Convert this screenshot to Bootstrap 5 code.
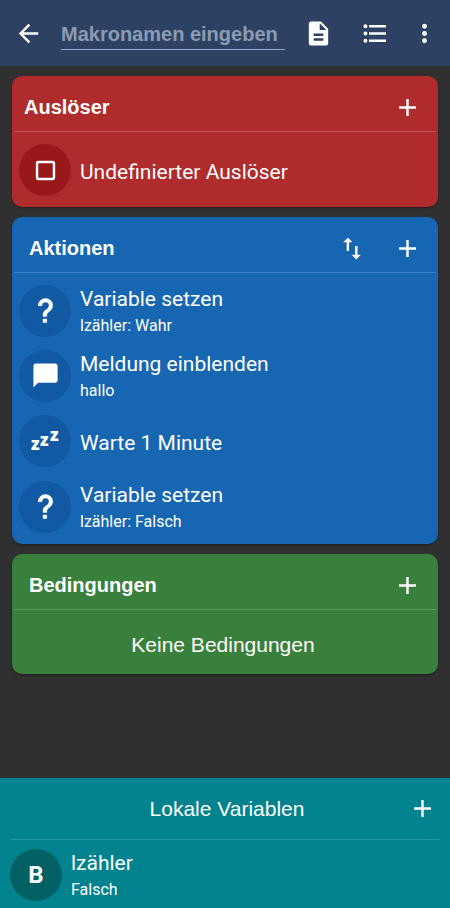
<!DOCTYPE html>
<html lang="de">
<head>
<meta charset="utf-8">
<meta name="viewport" content="width=device-width, initial-scale=1">
<title>Makro bearbeiten</title>
<link href="https://cdn.jsdelivr.net/npm/bootstrap@5.3.0/dist/css/bootstrap.min.css" rel="stylesheet">
<style>
  body { background: #303030; color: #fff; font-family: Roboto, sans-serif; }
  .topbar { background: #2d4263; height: 66px; padding: 0 4px 0 14px; }
  .macro-name {
    min-width: 0; height: 31px; margin: 2px 5px 0 18px; padding: 2px 0 0;
    background: transparent; color: #fff; border: 0; border-bottom: 1px solid #93a4e0;
    border-radius: 0; outline: 0;
    font: bold 20px/28px "Liberation Sans", sans-serif;
  }
  .macro-name::placeholder { color: #8c9bb1; opacity: 1; }
  .icon-btn { width: 56px; height: 44px; padding: 0; border: 0; color: #fff; background: transparent; flex: none; display: flex; align-items: center; justify-content: center; }
  .icon-btn.narrow { width: 44px; }
  .icon-btn.back { width: 29px; }
  .glyph { width: 29px; height: 29px; fill: currentColor; display: block; }
  .glyph-sleep { width: 48px; height: 48px; }
  main { padding: 10px 12px; gap: 10px; }
  .panel { border-radius: 10px; padding: 0 2px; box-shadow: 0 1px 2px rgba(0,0,0,.4); }
  .panel-red { background: #b02b2b; --disc: #991819; }
  .panel-blue { background: #1766b1; --disc: #1159a3; }
  .panel-green { background: #39803d; }
  .panel-teal { background: #00838f; --disc: #006064; }
  .panel-head { height: 56px; padding: 0 1px 0 15px; border-bottom: 1px solid rgba(255,255,255,.18); }
  .panel-red .panel-head { padding-left: 10px; }
  .panel-head h2 { font: bold 20px/28px "Liberation Sans", sans-serif; padding-top: 6px; }
  .rows { padding: 5px 5px 4px; }
  .panel-blue .rows { padding-bottom: 5px; }
  .entry { min-height: 66px; gap: 9px; }
  .disc { width: 52px; height: 52px; background: var(--disc); flex: none; }
  .entry-title { font-size: 21px; line-height: 30px; }
  .entry-sub { font-size: 16px; line-height: 24px; }
  .entry.two-line { min-height: 65px; }
  .plain-note { font: 21px/28px "Liberation Sans", sans-serif; }
  .empty { padding: 21px 4px 15px 0; }
  .vars { padding: 0 10px 6px; }
  .vars-head { height: 62px; border-bottom: 1px solid rgba(255,255,255,.15); display: grid; grid-template-columns: 44px 1fr 40px; align-items: center; }
  .vars .entry { padding-top: 8px; min-height: 62px; }
  .letter { font-size: 24px; line-height: 28px; font-weight: 700; }
</style>
</head>
<body>
<svg class="d-none" aria-hidden="true">
  <symbol id="plus" viewBox="0 0 24 24"><path d="M19 13h-6v6h-2v-6H5v-2h6V5h2v6h6z"/></symbol>
  <symbol id="question" viewBox="0 0 24 24"><path stroke="currentColor" stroke-width=".4" d="M10,19H13V22H10V19M12,2C17.35,2.22 19.68,7.62 16.5,11.67C15.67,12.67 14.33,13.33 13.67,14.17C13,15 13,16 13,17H10C10,15.33 10,13.92 10.67,12.92C11.33,11.92 12.67,11.33 13.5,10.67C15.92,8.43 15.32,5.26 12,5A3,3 0 0,0 9,8H6A6,6 0 0,1 12,2Z"/></symbol>
</svg>
<div class="d-flex flex-column min-vh-100">
  <header class="topbar d-flex align-items-center">
    <button type="button" class="icon-btn back" aria-label="Zurück"><svg class="glyph" viewBox="0 0 24 24"><path d="M20 11H7.830l5.590-5.590L12 4l-8 8 8 8 1.410-1.410L7.830 13H20z"/></svg></button>
    <input type="text" class="macro-name flex-grow-1" placeholder="Makronamen eingeben" aria-label="Makroname">
    <button type="button" class="icon-btn" aria-label="Notiz"><svg class="glyph" viewBox="0 0 24 24"><path d="M14 2H6c-1.100 0-2 .9-2 2v16c0 1.100.9 2 2 2h12c1.100 0 2-.9 2-2V8zm2 16H8v-2h8zm0-4H8v-2h8zm-3-5V3.500L18.500 9z"/></svg></button>
    <button type="button" class="icon-btn" aria-label="Liste"><svg class="glyph" viewBox="0 0 24 24"><circle cx="4.500" cy="6" r="1.600"/><circle cx="4.500" cy="12" r="1.600"/><circle cx="4.500" cy="18" r="1.600"/><path d="M7.500 5h14v2h-14zm0 6h14v2h-14zm0 6h14v2h-14z"/></svg></button>
    <button type="button" class="icon-btn narrow" aria-label="Mehr"><svg class="glyph" viewBox="0 0 24 24"><circle cx="12" cy="6" r="2"/><circle cx="12" cy="12" r="2"/><circle cx="12" cy="18" r="2"/></svg></button>
  </header>

  <main class="flex-grow-1 d-flex flex-column">
    <section class="panel panel-red">
      <div class="panel-head d-flex align-items-center">
        <h2 class="m-0 flex-grow-1">Auslöser</h2>
        <button type="button" class="icon-btn" aria-label="Auslöser hinzufügen"><svg class="glyph mt-2"><use href="#plus"/></svg></button>
      </div>
      <div class="rows">
        <div class="entry d-flex align-items-center">
          <span class="disc rounded-circle d-flex align-items-center justify-content-center"><svg class="glyph" viewBox="0 0 24 24"><rect x="5" y="5" width="14" height="14" rx="1" fill="none" stroke="currentColor" stroke-width="2"/></svg></span>
          <div class="entry-title pt-1">Undefinierter Auslöser</div>
        </div>
      </div>
    </section>

    <section class="panel panel-blue">
      <div class="panel-head d-flex align-items-center">
        <h2 class="m-0 flex-grow-1">Aktionen</h2>
        <button type="button" class="icon-btn" aria-label="Sortieren"><svg class="glyph mt-2" viewBox="0 0 24 24"><path d="M9 3L5.200 6.800h2.800V14h2V6.800h2.800zM16 21l3.800-3.800H17V10h-2v7.200h-2.800z"/></svg></button>
        <button type="button" class="icon-btn" aria-label="Aktion hinzufügen"><svg class="glyph mt-2"><use href="#plus"/></svg></button>
      </div>
      <div class="rows">
        <div class="entry two-line d-flex align-items-center">
          <span class="disc rounded-circle d-flex align-items-center justify-content-center"><svg class="glyph"><use href="#question"/></svg></span>
          <div><div class="entry-title">Variable setzen</div><div class="entry-sub">lzähler: Wahr</div></div>
        </div>
        <div class="entry two-line d-flex align-items-center">
          <span class="disc rounded-circle d-flex align-items-center justify-content-center"><svg class="glyph" viewBox="0 0 24 24"><path d="M20 2H4c-1.100 0-2 .9-2 2v18l4-4h14c1.100 0 2-.9 2-2V4c0-1.100-.9-2-2-2z"/></svg></span>
          <div><div class="entry-title">Meldung einblenden</div><div class="entry-sub">hallo</div></div>
        </div>
        <div class="entry d-flex align-items-center">
          <span class="disc rounded-circle d-flex align-items-center justify-content-center"><svg class="glyph glyph-sleep" viewBox="0 0 48 48" font-family="Open Sans, sans-serif" font-weight="800" font-size="17"><text x="10" y="33">z</text><text x="19" y="29">z</text><text x="29" y="24">z</text></svg></span>
          <div class="entry-title pt-1">Warte 1 Minute</div>
        </div>
        <div class="entry two-line d-flex align-items-center">
          <span class="disc rounded-circle d-flex align-items-center justify-content-center"><svg class="glyph"><use href="#question"/></svg></span>
          <div><div class="entry-title">Variable setzen</div><div class="entry-sub">lzähler: Falsch</div></div>
        </div>
      </div>
    </section>

    <section class="panel panel-green">
      <div class="panel-head d-flex align-items-center">
        <h2 class="m-0 flex-grow-1">Bedingungen</h2>
        <button type="button" class="icon-btn" aria-label="Bedingung hinzufügen"><svg class="glyph mt-2"><use href="#plus"/></svg></button>
      </div>
      <div class="empty plain-note text-center">Keine Bedingungen</div>
    </section>
  </main>

  <footer class="panel-teal vars">
    <div class="vars-head">
      <span></span>
      <h2 class="plain-note text-center m-0">Lokale Variablen</h2>
      <button type="button" class="icon-btn narrow" aria-label="Variable hinzufügen"><svg class="glyph"><use href="#plus"/></svg></button>
    </div>
    <div class="entry d-flex align-items-center">
      <span class="disc rounded-circle d-flex align-items-center justify-content-center"><span class="letter">B</span></span>
      <div><div class="entry-title">lzähler</div><div class="entry-sub">Falsch</div></div>
    </div>
  </footer>
</div>
<script src="https://cdn.jsdelivr.net/npm/bootstrap@5.3.0/dist/js/bootstrap.bundle.min.js"></script>
</body>
</html>
